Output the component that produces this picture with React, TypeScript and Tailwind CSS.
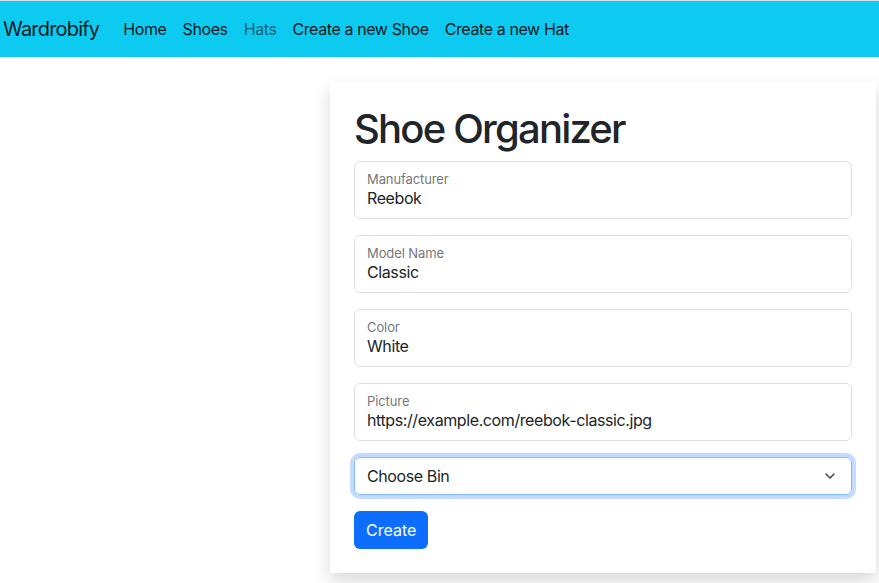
import { ChevronDown } from "lucide-react";

const NAV = [
  { label: "Home", muted: false },
  { label: "Shoes", muted: false },
  { label: "Hats", muted: true },
  { label: "Create a new Shoe", muted: false },
  { label: "Create a new Hat", muted: false },
];

const FIELDS = [
  { label: "Manufacturer", value: "Reebok" },
  { label: "Model Name", value: "Classic" },
  { label: "Color", value: "White" },
  { label: "Picture", value: "https://example.com/reebok-classic.jpg" },
];

export default function App() {
  return (
    <div className="min-h-[583px] bg-white font-['Inter','Liberation_Sans',sans-serif] text-[#212529]">
      <div className="h-px bg-[#d6dde0]" />
      {/* Navbar */}
      <nav className="h-[56px] bg-[#0dcaf0] flex items-center pl-[3px]">
        <span className="text-[20px] leading-[30px] tracking-[-0.8px] text-black/90 mr-4">Wardrobify</span>
        <ul className="flex items-center">
          {NAV.map((n) => (
            <li
              key={n.label}
              className={`px-2 text-[16px] leading-6 tracking-[-0.4px] ${n.muted ? "text-black/55" : "text-black/90"}`}
            >
              {n.label}
            </li>
          ))}
        </ul>
      </nav>

      {/* Form card */}
      <div className="pl-[330px] pt-6">
        <div className="w-[546px] bg-white p-6 shadow-[0_8px_16px_rgba(0,0,0,0.15)]">
          <h1 className="text-[40px] leading-[48px] font-medium mb-2 tracking-[-1.8px]">Shoe Organizer</h1>
          <form className="flex flex-col gap-4">
            {FIELDS.map((f) => (
              <div
                key={f.label}
                className="h-[58px] border border-[#dee2e6] rounded-[6px] px-3 flex flex-col justify-start pt-[8px]"
              >
                <span className="text-[13px] leading-[18px] tracking-[-0.1px] text-[#212529]/65">{f.label}</span>
                <span className="text-[16px] leading-6 tracking-[-0.4px] text-[#212529] -mt-[2px]">{f.value}</span>
              </div>
            ))}
            <div className="h-[38px] border border-[#86b7fe] rounded-[6px] px-3 flex items-center justify-between shadow-[0_0_0_4px_rgba(13,110,253,0.25)]">
              <span className="text-[16px] leading-6 tracking-[-0.4px]">Choose Bin</span>
              <ChevronDown size={16} strokeWidth={2} className="text-[#343a40] mr-[1px]" />
            </div>
            <div>
              <button
                type="button"
                className="h-[38px] px-3 rounded-[6px] bg-[#0d6efd] text-white text-[16px] leading-6"
              >
                Create
              </button>
            </div>
          </form>
        </div>
      </div>
    </div>
  );
}
